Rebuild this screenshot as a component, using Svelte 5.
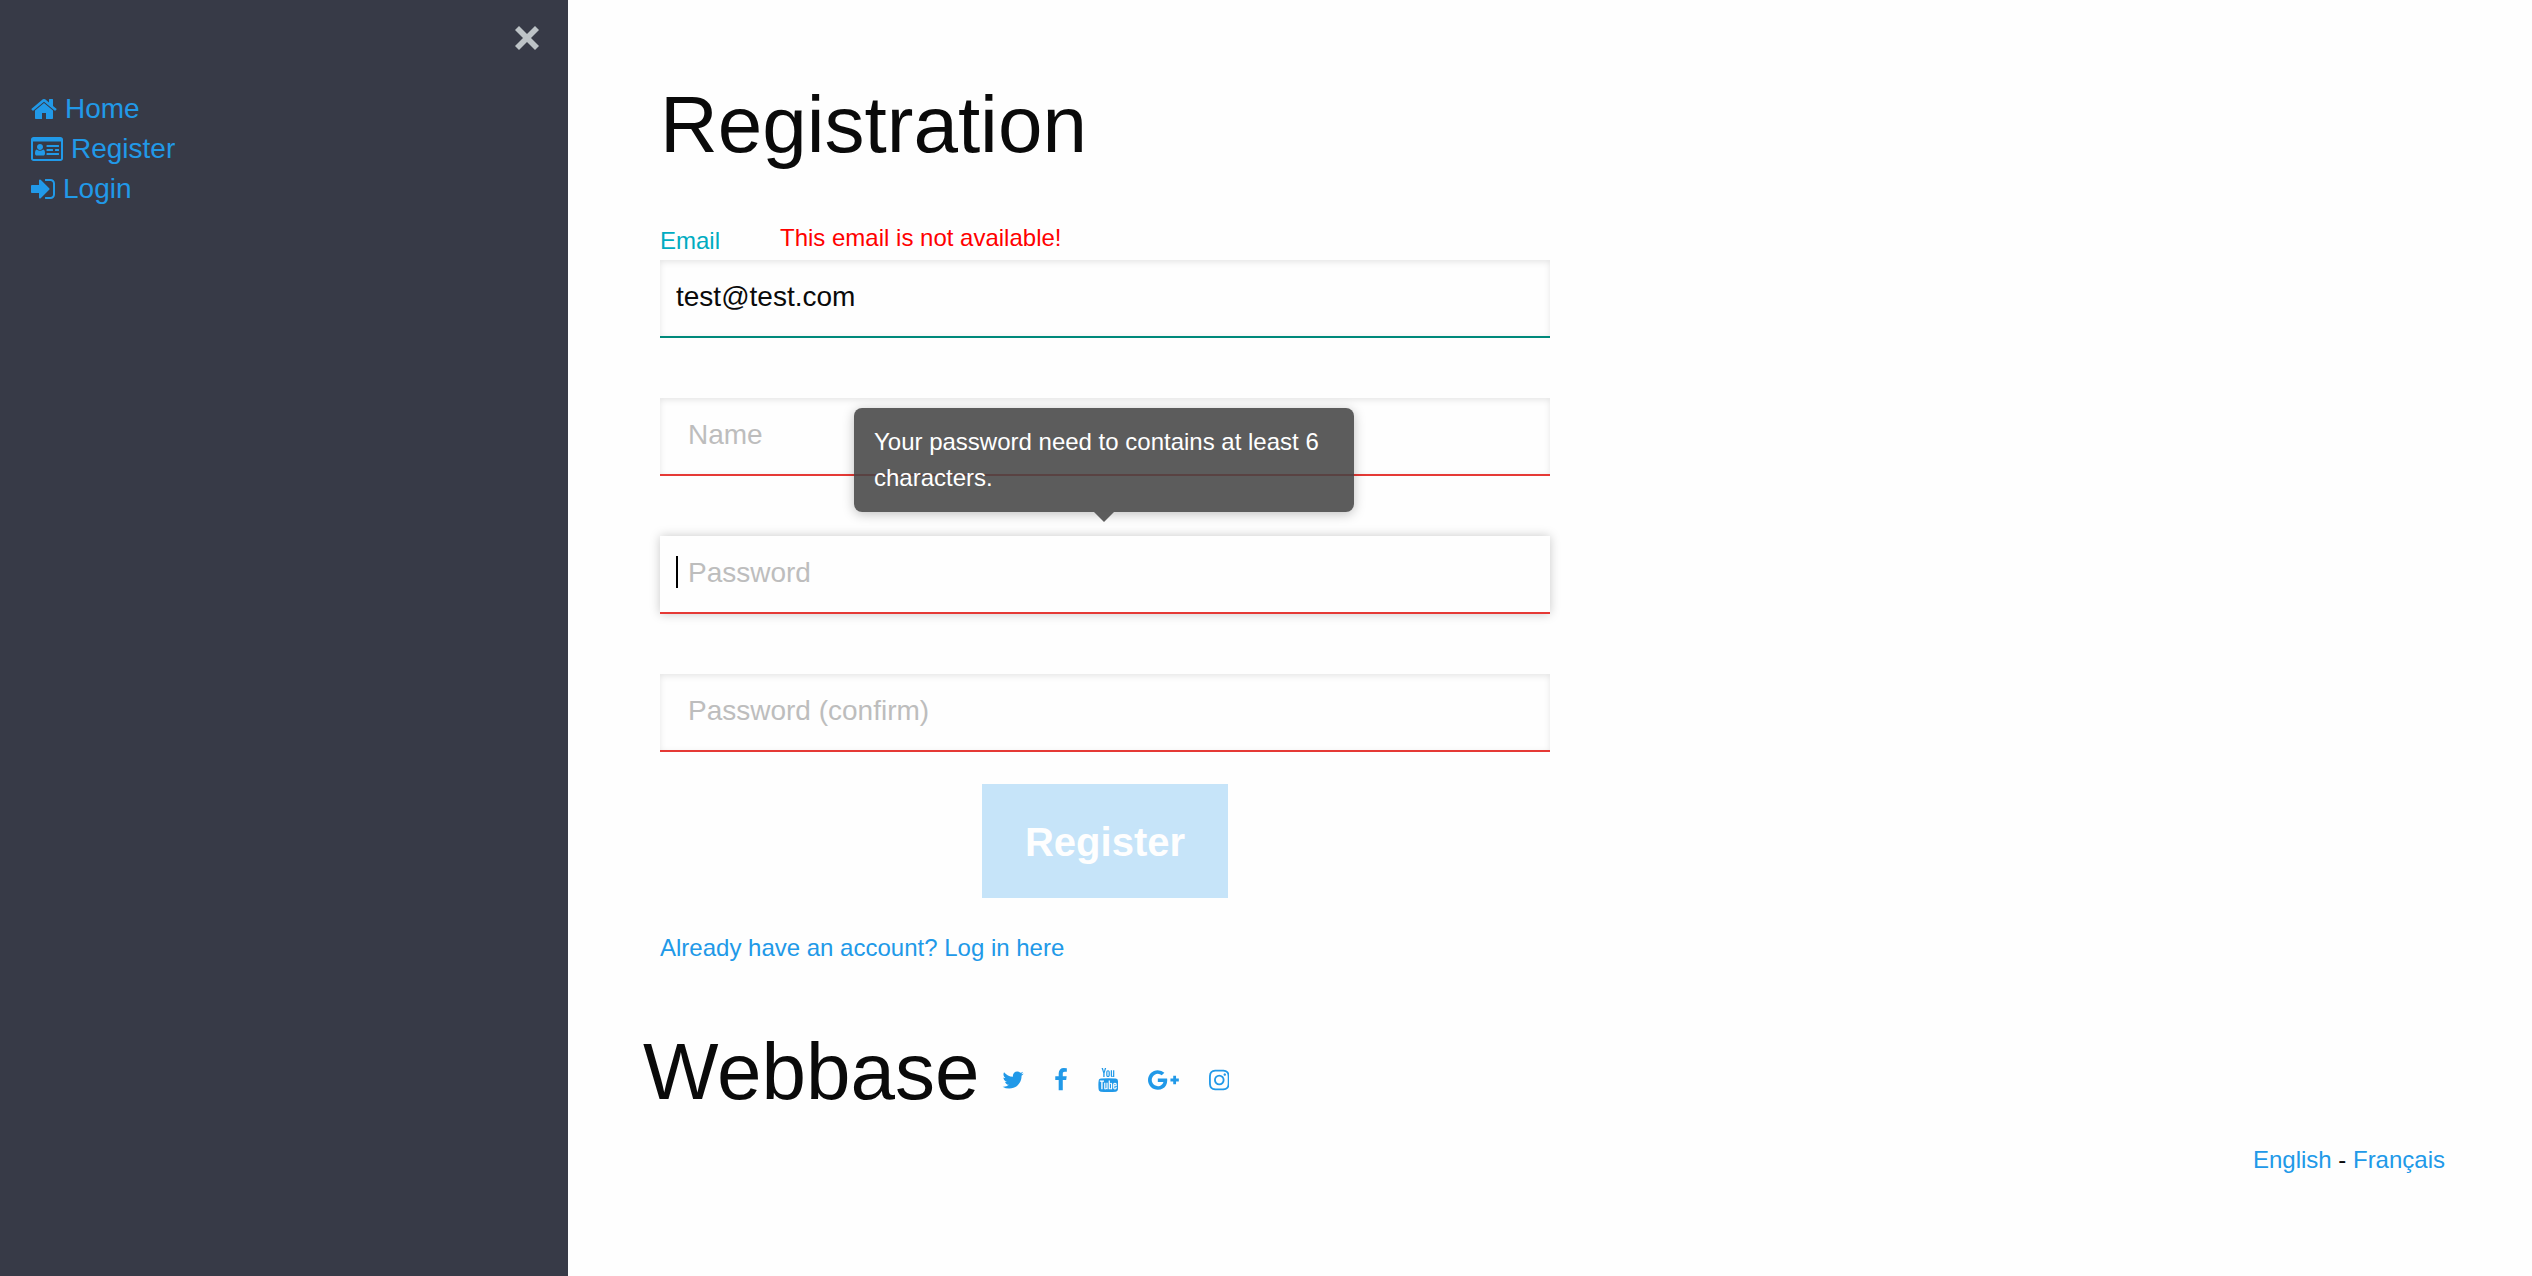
<script>
  const home = 'M1472 992v480q0 26-19 45t-45 19h-384v-384H768v384H384q-26 0-45-19t-19-45V992q0-1 .5-3t.5-3l575-474 575 474q1 2 1 6zm223-69l-62 74q-8 9-21 11h-3q-13 0-21-7L896 424l-692 577q-12 8-24 7-13-2-21-11l-62-74q-8-10-7-23.500T101 878l719-599q32-26 76-26t76 26l244 204V288q0-14 9-23t23-9h192q14 0 23 9t9 23v408l219 182q10 8 11 21.500t-7 23.500z';
  const card = 'M896 1190q0 54-31 91t-75 37H362q-44 0-75-37t-31-91q0-45 5-84t16-78.500 34-64T372 930q88 80 204 80t204-80q38 9 61 33.500t34 64 16 78.500 5 84zM768 764q0 80-56 136t-136 56-136-56-56-136 56-136 136-56 136 56 56 136zM1024 640h736q32 0 32 32v64q0 32-32 32h-736q-32 0-32-32v-64q0-32 32-32zM1024 896h352q32 0 32 32v64q0 32-32 32h-352q-32 0-32-32v-64q0-32 32-32zM1568 896h192q32 0 32 32v64q0 32-32 32h-192q-32 0-32-32v-64q0-32 32-32zM1024 1152h736q32 0 32 32v64q0 32-32 32h-736q-32 0-32-32v-64q0-32 32-32zM1920 1504V416H128v1088q0 13 9.500 22.500T160 1536h1728q13 0 22.500-9.500T1920 1504zM2048 288v1216q0 66-47 113t-113 47H160q-66 0-113-47T0 1504V288q0-66 47-113t113-47h1728q66 0 113 47t47 113z';
  const signIn = 'M1312 896q0 26-19 45l-544 544q-19 19-45 19t-45-19-19-45v-288h-448q-26 0-45-19t-19-45v-384q0-26 19-45t45-19h448v-288q0-26 19-45t45-19 45 19l544 544q19 19 19 45zm352-352v704q0 119-84.500 203.500t-203.500 84.500h-320q-13 0-22.500-9.500t-9.500-22.500q0-4-1-20t-.5-26.500 3-23.500 10-19.500 20.500-6.500h320q66 0 113-47t47-113v-704q0-66-47-113t-113-47h-312l-11.500-1-11.500-3-8-5.500-7-9-2-13.500q0-4-1-20t-.5-26.500 3-23.500 10-19.500 20.500-6.500h320q119 0 203.500 84.500t84.500 203.500z';
  const twitter = 'M1684 408q-67 98-162 167 1 14 1 42 0 130-38 259.500t-115.500 248.500-184.500 210.500-258 146-323 54.500q-271 0-496-145 35 4 78 4 225 0 401-138-105-2-188-64.500t-114-159.500q33 5 61 5 43 0 85-11-112-23-185.500-111.500t-73.500-205.500v-4q68 38 146 41-66-44-105-115t-39-154q0-88 44-163 121 149 294.500 238.500t371.500 99.500q-8-38-8-74 0-134 94.500-228.500t228.500-94.500q140 0 236 102 109-21 205-78-37 115-142 178 93-10 186-50z';
  const facebook = 'M1343 12v264h-157q-86 0-116 36t-30 108v189h293l-39 296h-254v759h-306v-759h-255v-296h255v-218q0-186 104-288.500t277-102.500q147 0 228 12z';
  const youtube = 'M1099 1244v211q0 67-39 67-23 0-45-22v-301q22-22 45-22 39 0 39 67zm338 1v46h-90v-46q0-68 45-68t45 68zm-966-218h107v-94h-312v94h105v569h100v-569zm288 569h89v-494h-89v378q-30 42-57 42-18 0-21-21-1-3-1-35v-364h-89v391q0 49 8 73 12 37 58 37 48 0 102-61v54zm429-148v-197q0-73-9-99-17-56-71-56-50 0-93 54v-217h-89v663h89v-48q45 55 93 55 54 0 71-55 9-27 9-100zm338-10v-13h-91q0 51-2 61-7 36-40 36-46 0-46-69v-87h179v-103q0-79-27-116-39-51-106-51-68 0-107 51-28 37-28 116v173q0 79 29 116 39 51 108 51 72 0 108-53 18-27 21-54 2-9 2-58zm-608-913v-210q0-69-43-69t-43 69v210q0 70 43 70t43-70zm719 751q0 234-26 350-14 59-58 99t-102 46q-184 21-555 21t-555-21q-58-6-102.500-46t-57.500-99q-26-112-26-350 0-234 26-350 14-59 58-99t103-47q183-20 554-20t555 20q58 7 102.500 47t57.500 99q26 112 26 350zm-998-1276h102l-121 399v271h-100v-271q-14-74-61-212-37-103-65-187h106l71 263zm370 333v175q0 81-28 118-38 51-106 51-67 0-105-51-28-38-28-118v-175q0-80 28-117 38-51 105-51 68 0 106 51 28 37 28 117zm335-162v499h-91v-55q-53 62-103 62-46 0-59-37-8-24-8-75v-394h91v367q0 33 1 35 3 22 21 22 27 0 57-43v-381h91z';
  const google = 'M1437 913q0 208-87 370.500t-248 254-369 91.500q-149 0-285-58t-234-156-156-234-58-285 58-285 156-234 234-156 285-58q286 0 491 192l-199 191q-117-113-292-113-123 0-227.500 62t-165.500 168.500-61 232.500 61 232.500 165.500 168.500 227.500 62q83 0 152.500-23t114.500-57.500 78.500-78.500 49-83 21.500-74h-416v-252h692q12 63 12 122zm867-122v210h-209v209h-210v-209h-209v-210h209v-209h210v209h209z';
  const instagram = 'M1152 896q0-106-75-181t-181-75-181 75-75 181 75 181 181 75 181-75 75-181zm138 0q0 164-115 279t-279 115-279-115-115-279 115-279 279-115 279 115 115 279zm108-410q0 38-27 65t-65 27-65-27-27-65 27-65 65-27 65 27 27 65zm-502-220q-7 0-76.500-.5t-105.500 0-96.500 3-103 10-71.500 18.500q-50 20-88 58t-58 88q-11 29-18.500 71.500t-10 103-3 96.500 0 105.500.5 76.500-.5 76.500 0 105.500 3 96.500 10 103 18.500 71.500q20 50 58 88t88 58q29 11 71.500 18.500t103 10 96.500 3 105.500 0 76.500-.5 76.500.5 105.500 0 96.500-3 103-10 71.500-18.500q50-20 88-58t58-88q11-29 18.500-71.500t10-103 3-96.500 0-105.500-.5-76.500.5-76.500 0-105.500-3-96.500-10-103-18.500-71.500q-20-50-58-88t-88-58q-29-11-71.500-18.500t-103-10-96.500-3-105.500 0-76.500.5zm768 630q0 229-5 317-10 208-124 322t-322 124q-88 5-317 5t-317-5q-208-10-322-124t-124-322q-5-88-5-317t5-317q10-208 124-322t322-124q88-5 317-5t317 5q208 10 322 124t124 322q5 88 5 317z';

  const nav = [
    { label: 'Home', box: '64 0 1664 1792', path: home },
    { label: 'Register', box: '0 0 2048 1792', path: card },
    { label: 'Login', box: '128 0 1536 1792', path: signIn }
  ];

  const social = [
    { label: 'Twitter', box: '64 0 1664 1792', path: twitter },
    { label: 'Facebook', box: '384 0 1024 1792', path: facebook },
    { label: 'YouTube', box: '128 0 1536 1792', path: youtube },
    { label: 'Google Plus', box: '0 0 2304 1792', path: google },
    { label: 'Instagram', box: '128 0 1536 1792', path: instagram }
  ];

  let email = $state('test@test.com');
  let name = $state('');
  let password = $state('');
  let confirm = $state('');
</script>

<div class="page">
  <aside>
    <button class="close" aria-label="Close menu">
      <svg viewBox="0 0 24 24"><path d="M4 0L12 8L20 0L24 4L16 12L24 20L20 24L12 16L4 24L0 20L8 12L0 4Z" /></svg>
    </button>
    <nav>
      {#each nav as item}
        <a href="#{item.label.toLowerCase()}"><svg class="icon" viewBox={item.box} aria-hidden="true"><path d={item.path} /></svg>{item.label}</a>
      {/each}
    </nav>
  </aside>

  <main>
    <form onsubmit={(e) => e.preventDefault()}>
      <h1>Registration</h1>
      <div class="labels">
        <label for="email">Email</label>
        <span class="error" role="alert">This email is not available!</span>
      </div>
      <input id="email" class="valid" type="email" bind:value={email} />
      <input type="text" aria-label="Name" placeholder="Name" bind:value={name} />
      <div class="field">
        <input class="active" type="password" aria-label="Password" aria-describedby="hint" placeholder="Password" bind:value={password} />
        <span class="caret"></span>
        <div id="hint" class="tooltip" role="tooltip">Your password need to contains at least 6 characters.</div>
      </div>
      <input type="password" aria-label="Password (confirm)" placeholder="Password (confirm)" bind:value={confirm} />
      <button class="submit" disabled>Register</button>
      <a class="login" href="#login">Already have an account? Log in here</a>
    </form>

    <footer>
      <div class="brand">
        <h2>Webbase</h2>
        <div class="social">
          {#each social as item}
            <a href="#{item.label.toLowerCase()}" aria-label={item.label}><svg class="icon" viewBox={item.box} aria-hidden="true"><path d={item.path} /></svg></a>
          {/each}
        </div>
      </div>
      <div class="languages"><a href="#en">English</a> - <a href="#fr">Français</a></div>
    </footer>
  </main>
</div>

<style>
  :global(body) {
    background: #fefefe;
  }

  .page {
    display: flex;
    min-height: 100vh;
    font-family: 'Liberation Sans', Arial, sans-serif;
    font-size: 24px;
    line-height: 36px;
    color: #0a0a0a;
  }

  a {
    color: #2199e8;
    text-decoration: none;
  }

  .icon {
    height: 1em;
    fill: currentColor;
  }

  aside {
    flex: none;
    box-sizing: border-box;
    width: 568px;
    padding: 26px 29px 0 31px;
    background: #373a47;
  }

  .close {
    display: block;
    width: 24px;
    height: 24px;
    margin-left: auto;
    padding: 0;
    border: 0;
    background: none;
  }

  .close svg {
    display: block;
    fill: #bdc3c7;
  }

  nav {
    display: grid;
    justify-items: start;
    margin-top: 39px;
    font-size: 28px;
    line-height: 40px;
  }

  nav a {
    display: flex;
    align-items: center;
    gap: 8px;
  }

  main {
    flex: 1;
    padding: 69px 87px 0 92px;
  }

  form {
    display: grid;
    max-width: 890px;
  }

  h1,
  h2 {
    margin: 0;
    font-size: 80px;
    font-weight: 400;
    line-height: 112px;
  }

  .labels {
    display: flex;
    gap: 60px;
    align-items: flex-start;
    margin-top: 39px;
    height: 40px;
  }

  label {
    padding-top: 3px;
    color: #00acc1;
  }

  .error {
    color: #f00;
  }

  input {
    box-sizing: border-box;
    width: 100%;
    height: 78px;
    margin: 0 0 60px;
    padding: 0 16px 2px;
    border: 0;
    border-bottom: 2px solid #e53935;
    outline: 0;
    background: #fefefe;
    box-shadow: inset 0 2px 6px rgba(10, 10, 10, 0.1);
    font: inherit;
    font-size: 28px;
    color: #0a0a0a;
  }

  input.valid {
    border-color: #00897b;
  }

  input.active {
    box-shadow: 0 0 10px #cacaca;
  }

  input::placeholder {
    padding-left: 12px;
    color: #bdbdbd;
    opacity: 1;
  }

  .field {
    position: relative;
  }

  .caret {
    position: absolute;
    top: 20px;
    left: 16px;
    width: 2px;
    height: 32px;
    background: #000;
  }

  .tooltip {
    position: absolute;
    bottom: 162px;
    left: 50%;
    box-sizing: border-box;
    width: 500px;
    margin-left: -251px;
    padding: 16px 20px;
    border-radius: 8px;
    background: rgba(68, 68, 68, 0.87);
    box-shadow: 0 2px 12px rgba(0, 0, 0, 0.25);
    color: #fff;
  }

  .tooltip::after {
    content: '';
    position: absolute;
    top: 100%;
    left: 50%;
    margin-left: -10px;
    border: 10px solid transparent;
    border-bottom: 0;
    border-top-color: #5d5d5d;
  }

  .submit {
    justify-self: center;
    margin-top: -28px;
    padding: 35px 43px 33px;
    border: 0;
    background: #c6e4f9;
    font: inherit;
    font-size: 40px;
    font-weight: 700;
    line-height: 46px;
    color: #fefefe;
  }

  .login {
    justify-self: start;
    margin-top: 32px;
  }

  .brand {
    display: flex;
    align-items: center;
    margin: 50px 0 0 -17px;
  }

  .social {
    display: flex;
    gap: 30px;
    margin-left: 22px;
    padding-top: 16px;
  }

  .social a {
    display: flex;
  }

  .languages {
    margin-top: 14px;
    text-align: right;
  }
</style>
